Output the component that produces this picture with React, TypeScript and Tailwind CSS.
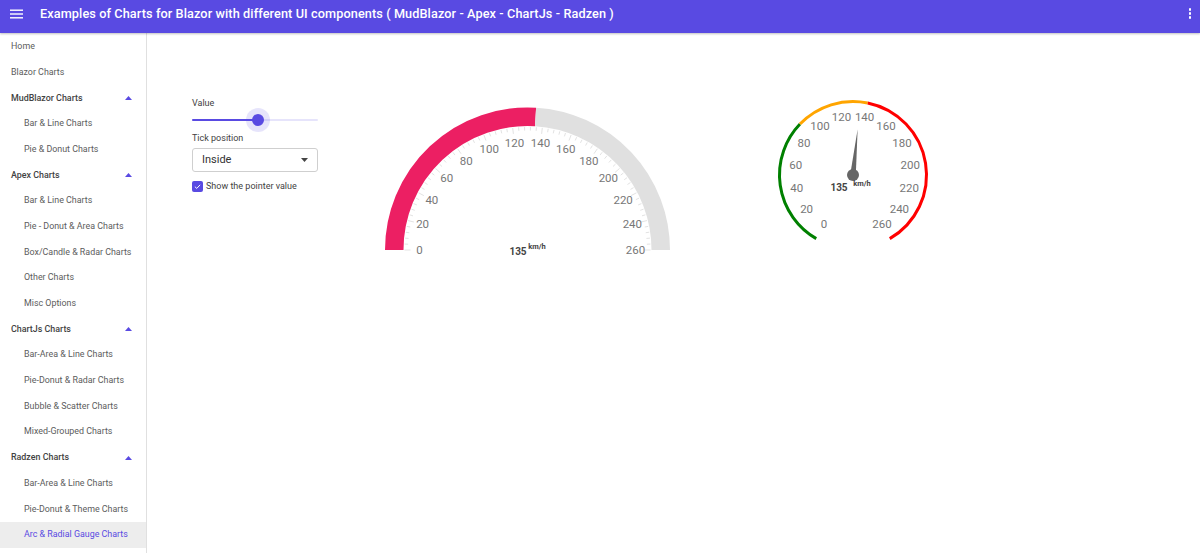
import React from 'react';

const PRIMARY = '#594ae2';

type NavItem = { label: string; group?: boolean; active?: boolean };

const NAV: NavItem[] = [
    { label: 'Home' },
    { label: 'Blazor Charts' },
    { label: 'MudBlazor Charts', group: true },
    { label: 'Bar & Line Charts' },
    { label: 'Pie & Donut Charts' },
    { label: 'Apex Charts', group: true },
    { label: 'Bar & Line Charts' },
    { label: 'Pie - Donut & Area Charts' },
    { label: 'Box/Candle & Radar Charts' },
    { label: 'Other Charts' },
    { label: 'Misc Options' },
    { label: 'ChartJs Charts', group: true },
    { label: 'Bar-Area & Line Charts' },
    { label: 'Pie-Donut & Radar Charts' },
    { label: 'Bubble & Scatter Charts' },
    { label: 'Mixed-Grouped Charts' },
    { label: 'Radzen Charts', group: true },
    { label: 'Bar-Area & Line Charts' },
    { label: 'Pie-Donut & Theme Charts' },
    { label: 'Arc & Radial Gauge Charts', active: true },
];

const TOP_LEVEL = new Set(['Home', 'Blazor Charts']);

const VALUE = 135;
const MAX = 260;
const LABELS = Array.from({ length: 14 }, (_, i) => i * 20);

// arc gauge: 0 at left (180deg), 260 at right (0deg)
const ArcGauge: React.FC = () => {
    const cx = 149.5;
    const cy = 150;
    const r = 133.25;
    const ang = (v: number) => Math.PI - (v / MAX) * Math.PI;
    const pt = (v: number, rad: number) => [cx + rad * Math.cos(ang(v)), cy - rad * Math.sin(ang(v))];
    const arc = (from: number, to: number) => {
        const [x1, y1] = pt(from, r);
        const [x2, y2] = pt(to, r);
        return `M ${x1} ${y1} A ${r} ${r} 0 0 1 ${x2} ${y2}`;
    };
    const ticks = Array.from({ length: 66 }, (_, i) => i * 4);
    return (
        <svg width="300" height="160" viewBox="0 0 300 160">
            <path d={arc(0, VALUE)} stroke="#ec1f63" strokeWidth="18.5" fill="none" />
            <path d={arc(VALUE, MAX)} stroke="#e0e0e0" strokeWidth="18.5" fill="none" />
            {ticks.map(t => {
                const major = t % 20 === 0;
                const [x1, y1] = pt(t, major ? 117 : 119.5);
                const [x2, y2] = pt(t, 123);
                return <line key={t} x1={x1} y1={y1} x2={x2} y2={y2} stroke="#e3e3e3" strokeWidth="1" />;
            })}
            {LABELS.map(l => {
                const [x, y] = pt(l, 108);
                return (
                    <text key={l} x={x} y={y} textAnchor="middle" dominantBaseline="central" fontSize="11.5" fill="#777">
                        {l}
                    </text>
                );
            })}
            <text x="140" y="151" textAnchor="middle" dominantBaseline="central" fontSize="10" fontWeight="700" fill="#444">135</text>
            <text x="159" y="146" textAnchor="middle" dominantBaseline="central" fontSize="7.5" fontWeight="700" fill="#444">km/h</text>
        </svg>
    );
};

// radial gauge: sweep -150..150 deg measured from top
const RadialGauge: React.FC = () => {
    const cx = 83;
    const cy = 85;
    const r = 73.5;
    const theta = (v: number) => ((v / MAX) * 300 - 150) * (Math.PI / 180);
    const pt = (v: number, rad: number) => [cx + rad * Math.sin(theta(v)), cy - rad * Math.cos(theta(v))];
    const arc = (from: number, to: number) => {
        const [x1, y1] = pt(from, r);
        const [x2, y2] = pt(to, r);
        const large = ((to - from) / MAX) * 300 > 180 ? 1 : 0;
        return `M ${x1} ${y1} A ${r} ${r} 0 ${large} 1 ${x2} ${y2}`;
    };
    const t = theta(VALUE);
    const len = 46;
    const tip = [cx + len * Math.sin(t), cy - len * Math.cos(t)];
    const bw = 2.8;
    const b1 = [cx + bw * Math.cos(t), cy + bw * Math.sin(t)];
    const b2 = [cx - bw * Math.cos(t), cy - bw * Math.sin(t)];
    return (
        <svg width="170" height="160" viewBox="0 0 170 160">
            <path d={arc(0, 90)} stroke="#008000" strokeWidth="3" fill="none" />
            <path d={arc(90, 140)} stroke="#ffa500" strokeWidth="3" fill="none" />
            <path d={arc(140, MAX)} stroke="#ff0000" strokeWidth="3" fill="none" />
            {LABELS.map(l => {
                const [x, y] = pt(l, 58);
                return (
                    <text key={l} x={x} y={y - 1} textAnchor="middle" dominantBaseline="central" fontSize="11.5" fill="#777">
                        {l}
                    </text>
                );
            })}
            <polygon points={`${b1[0]},${b1[1]} ${tip[0]},${tip[1]} ${b2[0]},${b2[1]}`} fill="#666" />
            <circle cx={cx} cy={cy} r="6" fill="#666" />
            <text x="69" y="97" textAnchor="middle" dominantBaseline="central" fontSize="10" fontWeight="700" fill="#444">135</text>
            <text x="92" y="93" textAnchor="middle" dominantBaseline="central" fontSize="7.5" fontWeight="700" fill="#444">km/h</text>
        </svg>
    );
};

const App: React.FC = () => {
    return (
        <div className="w-[1200px] h-[553px] overflow-hidden bg-white flex flex-col" style={{ fontFamily: 'Roboto, "Liberation Sans", sans-serif' }}>
            <header className="h-[33px] shrink-0 bg-[#594ae2] flex items-center pb-[6px] pl-[10px] pr-[9px] shadow-[0_1px_2px_rgba(0,0,0,0.25)] relative z-10">
                <svg width="13" height="10" viewBox="0 0 13 10" className="shrink-0">
                    <rect x="0" y="0.5" width="13" height="1.4" fill="#fff" />
                    <rect x="0" y="4.3" width="13" height="1.4" fill="#fff" />
                    <rect x="0" y="8.1" width="13" height="1.4" fill="#fff" />
                </svg>
                <h1 className="ml-[17px] text-white text-[12.7px] font-medium tracking-[0.1px] whitespace-nowrap">
                    Examples of Charts for Blazor with different UI components ( MudBlazor - Apex - ChartJs - Radzen )
                </h1>
                <div className="ml-auto flex flex-col gap-[1.6px]">
                    <span className="w-[2.5px] h-[2.5px] bg-white rounded-full" />
                    <span className="w-[2.5px] h-[2.5px] bg-white rounded-full" />
                    <span className="w-[2.5px] h-[2.5px] bg-white rounded-full" />
                </div>
            </header>
            <div className="flex flex-1 min-h-0">
                <nav className="w-[147px] shrink-0 border-r border-[#e0e0e0] flex flex-col pt-[1px]">
                    {NAV.map((item, i) => {
                        const indent = item.group || TOP_LEVEL.has(item.label) ? 'pl-[11px]' : 'pl-[24px]';
                        return (
                            <div
                                key={i}
                                className={`h-[25.7px] shrink-0 flex items-center pr-[14px] text-[8.9px] ${indent} ${item.group ? 'font-medium text-[#424242]' : 'text-[#5c5c5c]'} ${item.active ? 'bg-[#ededed] text-[#594ae2]' : ''}`}
                            >
                                <span className="whitespace-nowrap">{item.label}</span>
                                {item.group && (
                                    <svg width="7" height="4" viewBox="0 0 7 4" className="ml-auto">
                                        <polygon points="0,4 3.5,0 7,4" fill={PRIMARY} />
                                    </svg>
                                )}
                            </div>
                        );
                    })}
                </nav>
                <main className="flex-1 flex items-start">
                    <div className="ml-[45px] mt-[64px] w-[126px] flex flex-col">
                        <label className="text-[9px] text-[#424242] leading-[12px]">Value</label>
                        <div className="relative h-[20px] mt-[1px] flex items-center">
                            <div className="w-full h-[2px] bg-[#594ae2]/15 rounded" />
                            <div className="absolute left-0 w-[66px] h-[2px] bg-[#594ae2] rounded" />
                            <div className="absolute left-[54px] w-[24px] h-[24px] rounded-full bg-[#594ae2]/15" />
                            <div className="absolute left-[60px] w-[12px] h-[12px] rounded-full bg-[#594ae2]" />
                        </div>
                        <label className="text-[9px] text-[#424242] leading-[12px] mt-[2px]">Tick position</label>
                        <div className="mt-[4px] h-[24px] border border-[#cfcfcf] rounded-[3px] flex items-center pl-[9px] pr-[9px] text-[11px] text-[#333]">
                            <span>Inside</span>
                            <svg width="7" height="4" viewBox="0 0 7 4" className="ml-auto">
                                <polygon points="0,0 7,0 3.5,4" fill="#444" />
                            </svg>
                        </div>
                        <div className="mt-[8px] flex items-center gap-[3px]">
                            <div className="w-[11px] h-[11px] rounded-[2px] bg-[#594ae2] flex items-center justify-center">
                                <svg width="9" height="9" viewBox="0 0 24 24">
                                    <path d="M5 12.5 L10 17 L19 7.5" stroke="#fff" strokeWidth="2.6" fill="none" />
                                </svg>
                            </div>
                            <span className="text-[9px] text-[#424242] whitespace-nowrap">Show the pointer value</span>
                        </div>
                    </div>
                    <div className="ml-[60px] mt-[67px]">
                        <ArcGauge />
                    </div>
                    <div className="ml-[92px] mt-[57px]">
                        <RadialGauge />
                    </div>
                </main>
            </div>
        </div>
    );
};

export default App;
